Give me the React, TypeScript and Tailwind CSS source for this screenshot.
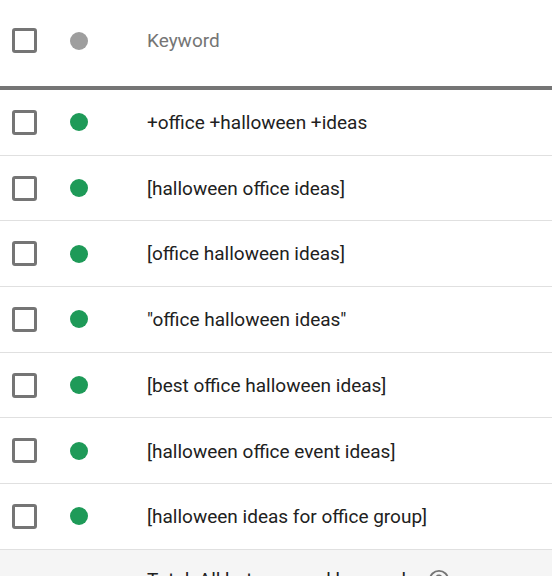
const keywords = [
  "+office +halloween +ideas",
  "[halloween office ideas]",
  "[office halloween ideas]",
  "\"office halloween ideas\"",
  "[best office halloween ideas]",
  "[halloween office event ideas]",
  "[halloween ideas for office group]",
];

function Checkbox() {
  return <div className="h-[25px] w-[25px] shrink-0 rounded-[3px] border-[3px] border-[#757575] bg-white" />;
}

function Row({ children, dot }: { children: React.ReactNode; dot: string }) {
  return (
    <div className="flex items-center pl-3">
      <Checkbox />
      <div className={`ml-[33px] h-[18px] w-[18px] shrink-0 rounded-full ${dot}`} />
      <div className="ml-[59px] pt-[2px]">{children}</div>
    </div>
  );
}

export default function App() {
  return (
    <div
      className="h-[576px] w-[552px] overflow-hidden bg-white text-[19px] text-[#212121]"
      style={{ fontFamily: "Roboto, 'Liberation Sans', sans-serif" }}
    >
      {/* Header */}
      <div className="flex h-[90px] items-center border-b-4 border-[#757575] pb-[5px]">
        <Row dot="bg-[#9e9e9e]">
          <span className="text-[#757575]">Keyword</span>
        </Row>
      </div>

      {/* Keyword rows */}
      {keywords.map((k) => (
        <div key={k} className="flex h-[65.7px] items-center border-b border-[#e0e0e0]">
          <Row dot="bg-[#1e9a58]">{k}</Row>
        </div>
      ))}

      {/* Total */}
      <div className="flex h-[60px] bg-[#f5f5f5] pl-[147px] pt-[16px]">
        <span>Total: All but removed keywords</span>
        <svg className="ml-3 mt-[3px]" width="22" height="22" viewBox="0 0 24 24" fill="none" stroke="#757575" strokeWidth="2">
          <circle cx="12" cy="12" r="10" />
          <path d="M9.1 9a3 3 0 0 1 5.8 1c0 2-3 3-3 3" />
          <circle cx="12" cy="17" r="0.6" fill="#757575" />
        </svg>
      </div>
    </div>
  );
}
